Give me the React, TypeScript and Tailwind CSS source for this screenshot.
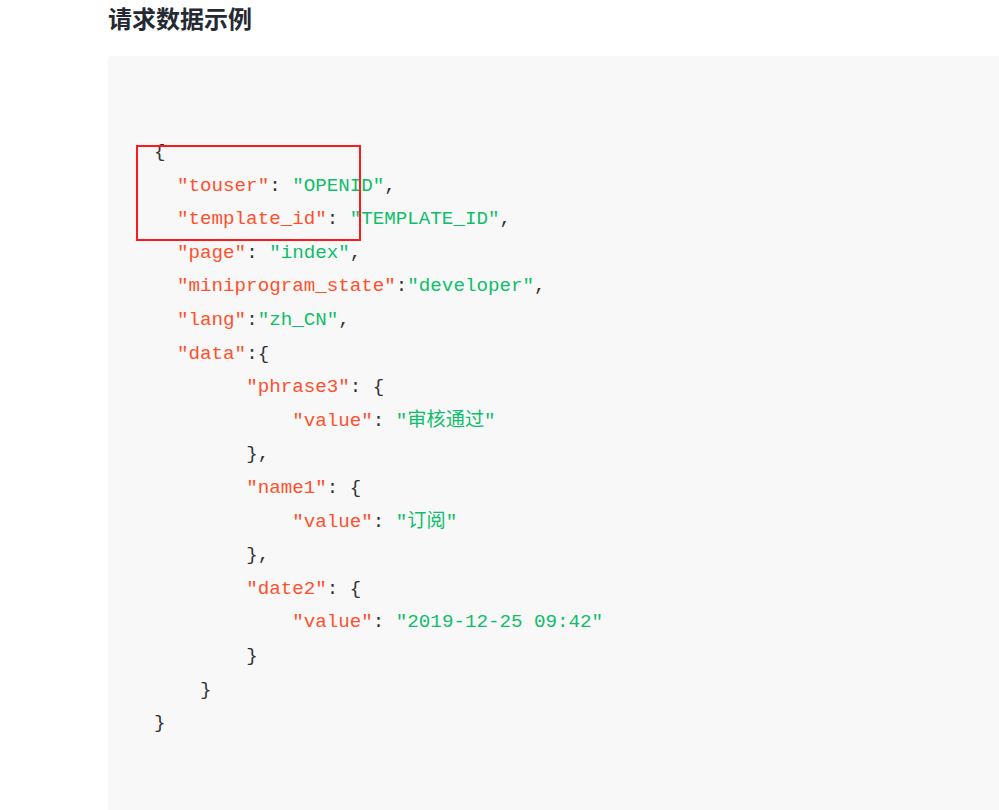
import React from 'react';

type Tok = { t: string; c?: 'k' | 's' };

const K = (t: string): Tok => ({ t, c: 'k' });
const S = (t: string): Tok => ({ t, c: 's' });
const P = (t: string): Tok => ({ t });

// each line: indent (chars) + tokens
const lines: [number, Tok[]][] = [
  [0, [P('{')]],
  [2, [K('"touser"'), P(': '), S('"OPENID"'), P(',')]],
  [2, [K('"template_id"'), P(': '), S('"TEMPLATE_ID"'), P(',')]],
  [2, [K('"page"'), P(': '), S('"index"'), P(',')]],
  [2, [K('"miniprogram_state"'), P(':'), S('"developer"'), P(',')]],
  [2, [K('"lang"'), P(':'), S('"zh_CN"'), P(',')]],
  [2, [K('"data"'), P(':{')]],
  [8, [K('"phrase3"'), P(': {')]],
  [12, [K('"value"'), P(': '), S('"审核通过"')]],
  [8, [P('},')]],
  [8, [K('"name1"'), P(': {')]],
  [12, [K('"value"'), P(': '), S('"订阅"')]],
  [8, [P('},')]],
  [8, [K('"date2"'), P(': {')]],
  [12, [K('"value"'), P(': '), S('"2019-12-25 09:42"')]],
  [8, [P('}')]],
  [4, [P('}')]],
  [0, [P('}')]],
];

export default function App() {
  return (
    <div className="w-[999px] h-[810px] overflow-hidden bg-white pl-[108px]">
      <h2
        className="text-[24px] leading-[36px] text-[#252933] font-bold"
        style={{ fontFamily: '"Noto Sans CJK SC", sans-serif' }}
      >
        请求数据示例
      </h2>
      <div className="relative mt-[20px] h-[800px] bg-[#f8f8f8] rounded-tl-[4px] pl-[46px]">
        <pre
          className="pt-[80px] text-[19.2px] leading-[33.6px] text-[#333]"
          style={{ fontFamily: '"Liberation Mono", "Noto Sans CJK SC", monospace' }}
        >
          {lines.map(([indent, toks], i) => (
            <div key={i} className="whitespace-pre">
              {' '.repeat(indent)}
              {toks.map((tk, j) => (
                <span
                  key={j}
                  className={tk.c === 'k' ? 'text-[#ff502c]' : tk.c === 's' ? 'text-[#0fbe6a]' : 'text-[#333]'}
                >
                  {tk.t}
                </span>
              ))}
            </div>
          ))}
        </pre>
        <div className="absolute left-[28px] top-[89px] w-[225px] h-[96px] border-[2.5px] border-[#ff1a1a]" />
      </div>
    </div>
  );
}
